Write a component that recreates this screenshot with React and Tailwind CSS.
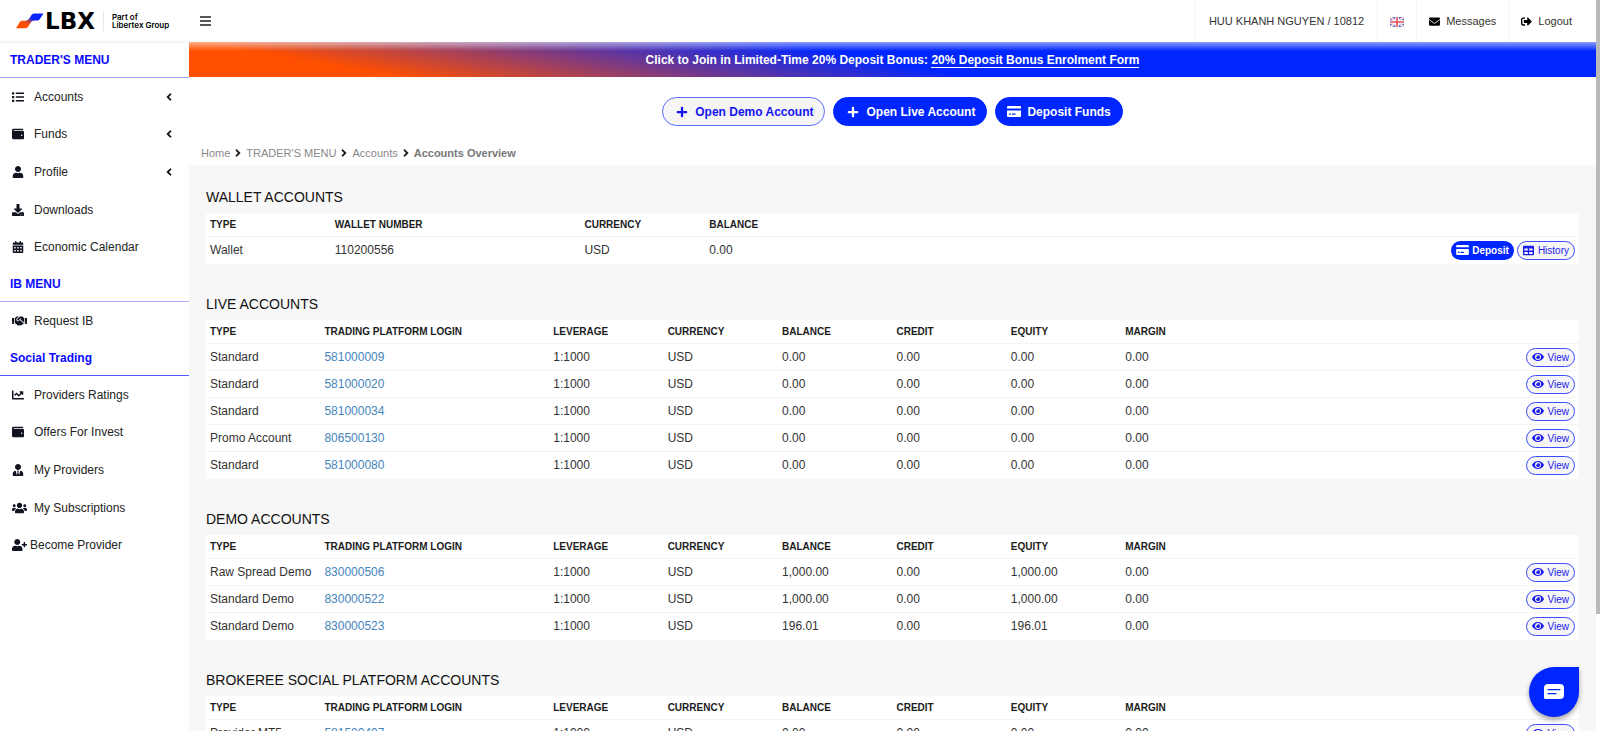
import React from "react";
import {
  FaList, FaWallet, FaUser, FaDownload, FaHandshake, FaChartLine, FaUserTie,
  FaUsers, FaUserPlus, FaPlus, FaTable, FaEye, FaEnvelope, FaSignOutAlt,
  FaChevronLeft, FaChevronRight,
} from "react-icons/fa";
import { FaCalendarDays } from "react-icons/fa6";

const MENU = [
  {
    title: "TRADER'S MENU",
    line: "border-[#9a9cff]",
    height: "h-[188px]",
    items: [
      { icon: FaList, label: "Accounts", more: true },
      { icon: FaWallet, label: "Funds", more: true },
      { icon: FaUser, label: "Profile", more: true },
      { icon: FaDownload, label: "Downloads" },
      { icon: FaCalendarDays, label: "Economic Calendar" },
    ],
  },
  {
    title: "IB MENU",
    line: "border-[#a9abff]",
    height: "h-[38px]",
    items: [{ icon: FaHandshake, label: "Request IB", wide: true }],
  },
  {
    title: "Social Trading",
    line: "border-[#5458ff]",
    height: "h-[188px]",
    items: [
      { icon: FaChartLine, label: "Providers Ratings" },
      { icon: FaWallet, label: "Offers For Invest" },
      { icon: FaUserTie, label: "My Providers" },
      { icon: FaUsers, label: "My Subscriptions", wide: true },
      { icon: FaUserPlus, label: "Become Provider", wide: true, tight: true },
    ],
  },
];

const TRADING_COLUMNS = ["TYPE", "TRADING PLATFORM LOGIN", "LEVERAGE", "CURRENCY", "BALANCE", "CREDIT", "EQUITY", "MARGIN"];

const LIVE = [
  ["Standard", "581000009", "1:1000", "USD", "0.00", "0.00", "0.00", "0.00"],
  ["Standard", "581000020", "1:1000", "USD", "0.00", "0.00", "0.00", "0.00"],
  ["Standard", "581000034", "1:1000", "USD", "0.00", "0.00", "0.00", "0.00"],
  ["Promo Account", "806500130", "1:1000", "USD", "0.00", "0.00", "0.00", "0.00"],
  ["Standard", "581000080", "1:1000", "USD", "0.00", "0.00", "0.00", "0.00"],
];

const DEMO = [
  ["Raw Spread Demo", "830000506", "1:1000", "USD", "1,000.00", "0.00", "1,000.00", "0.00"],
  ["Standard Demo", "830000522", "1:1000", "USD", "1,000.00", "0.00", "1,000.00", "0.00"],
  ["Standard Demo", "830000523", "1:1000", "USD", "196.01", "0.00", "196.01", "0.00"],
];

const SOCIAL = [["Provider MT5", "581500407", "1:1000", "USD", "0.00", "0.00", "0.00", "0.00"]];

function CardIcon({ className }) {
  return (
    <svg viewBox="0 0 14 11" className={className} fill="currentColor" aria-hidden="true">
      <path d="M1 0h12a1 1 0 0 1 1 1v1.5H0V1a1 1 0 0 1 1-1z" />
      <path fillRule="evenodd" d="M0 4.5h14V10a1 1 0 0 1-1 1H1a1 1 0 0 1-1-1zM2 7.5v1.2h1.8V7.5zm3 0v1.2h3.5V7.5z" />
    </svg>
  );
}

function Logo() {
  return (
    <a href="#" aria-label="LBX" className="flex items-center text-black">
      <svg viewBox="0 0 28 16" className="h-4 w-7" aria-hidden="true">
        <defs>
          <linearGradient id="mark" x1="0" y1="1" x2="1" y2="0">
            <stop offset="0.35" stopColor="#ff4f00" />
            <stop offset="0.5" stopColor="#93406f" />
            <stop offset="0.62" stopColor="#0a24ff" />
          </linearGradient>
        </defs>
        <path
          fill="url(#mark)"
          d="M4 8.800Q4.700 7.700 6 7.700H9.500Q12 7.700 13.300 5.600L15.500 2Q16.400.5 18 .5H27.500L23.700 6.300Q23 7.500 21.500 7.500H18.500Q16 7.500 14.600 9.700L12 13.700Q11 15.200 9.500 15.200H0z"
        />
      </svg>
      <span className="ml-px font-['DejaVu_Sans',sans-serif] text-[23px] leading-6 font-bold">LBX</span>
      <span className="ml-2 h-5 w-px bg-gray-200" />
      <span className="ml-2 font-['Inter',sans-serif] text-[8px] leading-2 font-semibold whitespace-nowrap">
        Part of
        <br />
        Libertex Group
      </span>
    </a>
  );
}

function Sidebar() {
  return (
    <aside className="w-[189px] shrink-0 bg-white">
      <div className="flex h-[42px] items-center border-b border-gray-100 pl-4 shadow-xs">
        <Logo />
      </div>
      <nav>
        {MENU.map((group) => (
          <section key={group.title}>
            <h2 className={`flex h-9 items-center border-b pl-[10px] text-[12px] font-bold text-[#0a0aff] ${group.line}`}>
              {group.title}
            </h2>
            <ul className={`flex flex-col ${group.height}`}>
              {group.items.map(({ icon: Icon, label, more, wide, tight }) => (
                <li key={label} className="flex flex-1">
                  <a href="#" className="flex flex-1 items-center pr-4 pl-3 text-[12px] text-[#222]">
                    <span className={tight ? "w-[18px]" : "w-[22px]"}>
                      <Icon className={wide ? "h-3 w-[15px] text-[#10131f]" : "size-3 text-[#10131f]"} />
                    </span>
                    <span className="flex-1">{label}</span>
                    {more && <FaChevronLeft className="size-2 stroke-current stroke-[40] text-black" />}
                  </a>
                </li>
              ))}
            </ul>
          </section>
        ))}
      </nav>
    </aside>
  );
}

function Flag() {
  return (
    <svg viewBox="0 0 14 10" className="h-[10px] w-[14px]" role="img" aria-label="English">
      <rect width="14" height="10" fill="#5a6ab8" />
      <path d="M0 0l14 10M14 0L0 10" stroke="#fff" strokeWidth="2.200" />
      <path d="M0 0l14 10M14 0L0 10" stroke="#e88a98" strokeWidth="0.600" />
      <path d="M7 0v10M0 5h14" stroke="#fff" strokeWidth="3.600" />
      <path d="M7 0v10M0 5h14" stroke="#e8525e" strokeWidth="1.600" />
    </svg>
  );
}

function TopBar() {
  return (
    <header className="flex h-[42px] shrink-0 items-stretch bg-white text-[11px] text-[#333]">
      <button type="button" aria-label="Toggle menu" className="px-[11px]">
        <svg viewBox="0 0 11 10" className="h-[10px] w-[11px] stroke-[#222]" aria-hidden="true">
          <path strokeWidth="1.500" d="M0 1h11M0 5h11M0 9h11" />
        </svg>
      </button>
      <div className="ml-auto flex divide-x divide-gray-100 border-l border-gray-100">
        <span className="flex items-center px-[13px]">HUU KHANH NGUYEN / 10812</span>
        <button type="button" className="flex items-center px-3 pt-[2px]">
          <Flag />
        </button>
        <a href="#" className="flex items-center gap-[6px] px-3">
          <FaEnvelope className="size-[11px] text-black" />
          Messages
        </a>
        <a href="#" className="flex items-center gap-[6px] pr-6 pl-3">
          <FaSignOutAlt className="size-[11px] text-black" />
          Logout
        </a>
      </div>
    </header>
  );
}

const PILL = "flex h-[29px] items-center rounded-full border text-[12px] font-bold";
const SMALL = "flex h-[19px] items-center gap-1 rounded-full border border-[#3b4cff] bg-[#f5f5f5] px-[5px] text-[10px] text-[#1a1aee]";

function ViewButton() {
  return (
    <button type="button" className={SMALL}>
      <FaEye className="size-3" />
      View
    </button>
  );
}

function AccountsTable({ title, columns, widths, rows, linkColumn, actions }) {
  return (
    <section>
      <h2 className="pb-[6px] text-[14px] leading-5 text-[#111]">{title}</h2>
      <table className="w-full table-fixed border-separate border-spacing-0 overflow-hidden rounded-[3px] bg-white text-left">
        <colgroup>
          {widths.map((w, i) => (
            <col key={i} className={w} />
          ))}
        </colgroup>
        <thead>
          <tr className="h-6">
            {columns.map((c) => (
              <th key={c} scope="col" className="border-b border-[#f3f3f3] px-1 py-0 text-[10px] leading-4 font-bold whitespace-nowrap text-[#1c1c1c]">
                {c}
              </th>
            ))}
            <td className="border-b border-[#f3f3f3] p-0" />
          </tr>
        </thead>
        <tbody>
          {rows.map((row) => (
            <tr key={row[1]} className="group h-[27px]">
              {row.map((cell, i) => (
                <td key={i} className="border-b border-[#f3f3f3] px-1 py-0 text-[12px] leading-4 whitespace-nowrap text-[#333] group-last:border-white">
                  {i === linkColumn ? <a href="#" className="text-[#4685bd]">{cell}</a> : cell}
                </td>
              ))}
              <td className="border-b border-[#f3f3f3] px-1 py-0 group-last:border-white">
                <div className="flex justify-end gap-[3px]">{actions}</div>
              </td>
            </tr>
          ))}
        </tbody>
      </table>
    </section>
  );
}

const TWELFTHS = ["w-1/12", "w-2/12", "w-1/12", "w-1/12", "w-1/12", "w-1/12", "w-1/12", "w-1/12", "w-3/12"];
const ELEVENTHS = ["w-1/11", "w-2/11", "w-1/11", "w-1/11", "w-6/11"];

function Breadcrumb() {
  const trail = ["Home", "TRADER'S MENU", "Accounts"];
  return (
    <nav aria-label="Breadcrumb" className="px-3">
      <ol className="flex items-center text-[11px] leading-[24px] text-[#888]">
        {trail.map((t) => (
          <li key={t} className="flex items-center">
            <a href="#">{t}</a>
            <FaChevronRight className="mx-1 size-2 stroke-current stroke-[40] text-black" />
          </li>
        ))}
        <li className="font-bold text-[#777]">Accounts Overview</li>
      </ol>
    </nav>
  );
}

export default function App() {
  return (
    <div className="flex h-screen overflow-hidden bg-white font-['Liberation_Sans',Arial,sans-serif]">
      <Sidebar />
      <div className="flex min-w-0 flex-1 flex-col">
        <TopBar />
        <div className="flex h-[35px] shrink-0 items-center justify-center bg-[linear-gradient(to_bottom,rgba(255,255,255,0.55),rgba(255,255,255,0)_9px),linear-gradient(10deg,#ff4f00_13%,#0026ff_49%)] text-[12px] font-bold text-white">
          <p>
            Click to Join in Limited-Time 20% Deposit Bonus:{" "}
            <a href="#" className="border-b border-white">20% Deposit Bonus Enrolment Form</a>
          </p>
        </div>
        <div className="flex justify-center gap-2 pt-5 pb-[15px]">
          <button type="button" className={`${PILL} gap-[7px] border-[#5a6bff] bg-[#f5f5f5] pr-[11px] pl-[13px] text-[#1414f0]`}>
            <FaPlus className="size-3" />
            Open Demo Account
          </button>
          <button type="button" className={`${PILL} gap-[7px] border-[#0026ff] bg-[#0026ff] pr-[11px] pl-[13px] text-white`}>
            <FaPlus className="size-3" />
            Open Live Account
          </button>
          <button type="button" className={`${PILL} gap-[6px] border-[#0026ff] bg-[#0026ff] px-[11px] text-white`}>
            <CardIcon className="h-[11px] w-[14px]" />
            Deposit Funds
          </button>
        </div>
        <Breadcrumb />
        <main className="flex min-h-0 flex-1 flex-col gap-[30px] overflow-hidden bg-[#f7f7f7] px-[17px] pt-[22px]">
          <AccountsTable
            title="WALLET ACCOUNTS"
            columns={["TYPE", "WALLET NUMBER", "CURRENCY", "BALANCE"]}
            widths={ELEVENTHS}
            rows={[["Wallet", "110200556", "USD", "0.00"]]}
            actions={
              <>
                <button type="button" className="flex h-[19px] items-center gap-[3px] rounded-full bg-[#0026ff] px-[5px] text-[10px] font-bold text-white">
                  <CardIcon className="h-[10px] w-[13px]" />
                  Deposit
                </button>
                <button type="button" className={SMALL}>
                  <FaTable className="size-[11px]" />
                  History
                </button>
              </>
            }
          />
          <AccountsTable title="LIVE ACCOUNTS" columns={TRADING_COLUMNS} widths={TWELFTHS} rows={LIVE} linkColumn={1} actions={<ViewButton />} />
          <AccountsTable title="DEMO ACCOUNTS" columns={TRADING_COLUMNS} widths={TWELFTHS} rows={DEMO} linkColumn={1} actions={<ViewButton />} />
          <AccountsTable title="BROKEREE SOCIAL PLATFORM ACCOUNTS" columns={TRADING_COLUMNS} widths={TWELFTHS} rows={SOCIAL} linkColumn={1} actions={<ViewButton />} />
        </main>
      </div>
      <div className="w-1 shrink-0 bg-white">
        <div className="h-[84%] bg-[#b9b9b9]" />
      </div>
      <button
        type="button"
        aria-label="Open chat"
        className="fixed right-[21px] bottom-[14px] flex size-[50px] items-center justify-center rounded-full rounded-tr-[5px] bg-[#0026ff] shadow-[0_3px_5px_rgba(0,0,0,0.35)]"
      >
        <svg viewBox="0 0 20 16" className="h-4 w-5" aria-hidden="true">
          <path fill="#fff" d="M4 0h12a4 4 0 0 1 4 4v7a4 4 0 0 1-4 4H1.500A1.500 1.500 0 0 1 0 13.500V4a4 4 0 0 1 4-4z" />
          <path stroke="#0026ff" strokeWidth="1.200" strokeLinecap="round" d="M4 5.600h12M4 9.700h8" />
        </svg>
      </button>
    </div>
  );
}
